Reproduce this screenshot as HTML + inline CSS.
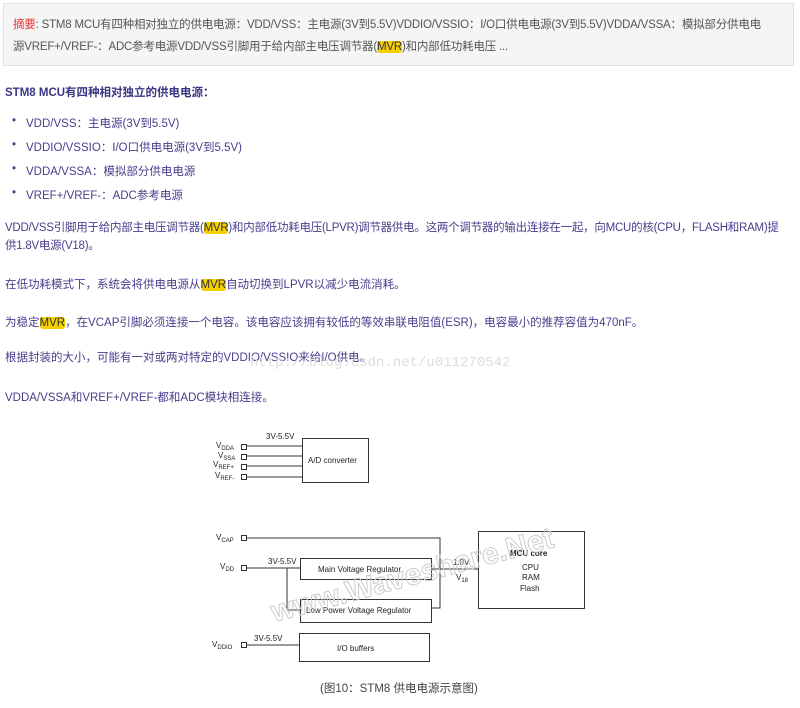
<!DOCTYPE html>
<html><head><meta charset="utf-8"><style>
body{margin:0;background:#fff;width:800px;height:708px;overflow:hidden;font-family:"Liberation Sans","Noto Sans CJK SC",sans-serif;font-size:11.5px;color:#4a3d8c;position:relative}
.sum{position:absolute;left:3px;top:3px;width:791px;height:63px;background:#f5f5f5;border:1px solid #e0e0e0;color:#555;line-height:22px;padding:0 0 0 9px;box-sizing:border-box;padding-top:10px;white-space:nowrap;letter-spacing:-0.2px}
.sum b{color:#e33;font-weight:normal}
.hl{background:#f5d000;border-radius:3px;color:#333}
.p{position:absolute;left:5px;white-space:nowrap}
.li{position:absolute;left:12px;white-space:nowrap}
.li:before{content:"•";position:absolute;left:0}
.li span{margin-left:14px}
svg text{font-family:"Liberation Sans",sans-serif;fill:#222}
</style></head><body>
<div class="sum"><b>摘要</b>: STM8 MCU有四种相对独立的供电电源：VDD/VSS：主电源(3V到5.5V)VDDIO/VSSIO：I/O口供电电源(3V到5.5V)VDDA/VSSA：模拟部分供电电<br>源VREF+/VREF-：ADC参考电源VDD/VSS引脚用于给内部主电压调节器(<span class="hl">MVR</span>)和内部低功耗电压 ...</div>
<div class="p" style="top:84px;font-weight:bold;color:#3c3585">STM8 MCU有四种相对独立的供电电源：</div>
<div class="li" style="top:115px"><span>VDD/VSS：主电源(3V到5.5V)</span></div>
<div class="li" style="top:139px"><span>VDDIO/VSSIO：I/O口供电电源(3V到5.5V)</span></div>
<div class="li" style="top:163px"><span>VDDA/VSSA：模拟部分供电电源</span></div>
<div class="li" style="top:187px"><span>VREF+/VREF-：ADC参考电源</span></div>
<div class="p" style="top:219px;line-height:18px;letter-spacing:-0.25px">VDD/VSS引脚用于给内部主电压调节器(<span class="hl">MVR</span>)和内部低功耗电压(LPVR)调节器供电。这两个调节器的输出连接在一起，向MCU的核(CPU，FLASH和RAM)提<br>供1.8V电源(V18)。</div>
<div class="p" style="top:276px">在低功耗模式下，系统会将供电电源从<span class="hl">MVR</span>自动切换到LPVR以减少电流消耗。</div>
<div class="p" style="top:314px">为稳定<span class="hl">MVR</span>，在VCAP引脚必须连接一个电容。该电容应该拥有较低的等效串联电阻值(ESR)，电容最小的推荐容值为470nF。</div>
<div class="p" style="top:349px">根据封装的大小，可能有一对或两对特定的VDDIO/VSSIO来给I/O供电。</div>
<div class="p" style="top:389px">VDDA/VSSA和VREF+/VREF-都和ADC模块相连接。</div>
<div class="p" style="left:250px;top:355px;color:#ddd;font-family:'Liberation Mono',monospace;font-size:14px">http://blog.csdn.net/u011270542</div>
<svg width="800" height="708" style="position:absolute;left:0;top:0" font-size="8">
<g fill="none" stroke="#333" stroke-width="1">
<rect x="302.5" y="438.5" width="66" height="44"/>
<rect x="478.5" y="531.5" width="106" height="77"/>
<rect x="300.5" y="558.5" width="131" height="21"/>
<rect x="300.5" y="599.5" width="131" height="23"/>
<rect x="299.5" y="633.5" width="130" height="28"/>
<rect x="241.5" y="444.5" width="5" height="5"/><rect x="241.5" y="454.5" width="5" height="5"/><rect x="241.5" y="464.5" width="5" height="5"/><rect x="241.5" y="474.5" width="5" height="5"/>
<rect x="241.5" y="535.5" width="5" height="5"/><rect x="241.5" y="565.5" width="5" height="5"/><rect x="241.5" y="642.5" width="5" height="5"/>
<path d="M247 446H302M247 456H302M247 466H302M247 477H302M247 538H440V608H432M247 568H300M287 568V610H300M432 569H478M247 645H299"/>
</g>
<text x="266" y="439">3V-5.5V</text>
<text x="308" y="463">A/D converter</text>
<text x="216" y="448">V<tspan font-size="6" dy="2">DDA</tspan></text>
<text x="218" y="458">V<tspan font-size="6" dy="2">SSA</tspan></text>
<text x="213" y="467">V<tspan font-size="6" dy="2">REF+</tspan></text>
<text x="215" y="478">V<tspan font-size="6" dy="2">REF-</tspan></text>
<text x="216" y="540">V<tspan font-size="6" dy="2">CAP</tspan></text>
<text x="220" y="569">V<tspan font-size="6" dy="2">DD</tspan></text>
<text x="212" y="647">V<tspan font-size="6" dy="2">DDIO</tspan></text>
<text x="268" y="564">3V-5.5V</text>
<text x="318" y="572">Main Voltage Regulator</text>
<text x="306" y="613">Low Power Voltage Regulator</text>
<text x="254" y="641">3V-5.5V</text>
<text x="337" y="651">I/O buffers</text>
<text x="453" y="565">1.8V</text>
<text x="456" y="580">V<tspan font-size="6" dy="2">18</tspan></text>
<text x="510" y="556" font-weight="bold">MCU core</text>
<text x="522" y="570">CPU</text><text x="522" y="580">RAM</text><text x="520" y="591">Flash</text>
<text x="262" y="590" font-size="30" font-weight="bold" style="fill:none" stroke="#ccc" stroke-width="1" transform="rotate(-15 390 560)">www.Waveshare.Net</text>
</svg>
<div class="p" style="left:320px;top:680px;color:#444">(图10：STM8 供电电源示意图)</div>
</body></html>
